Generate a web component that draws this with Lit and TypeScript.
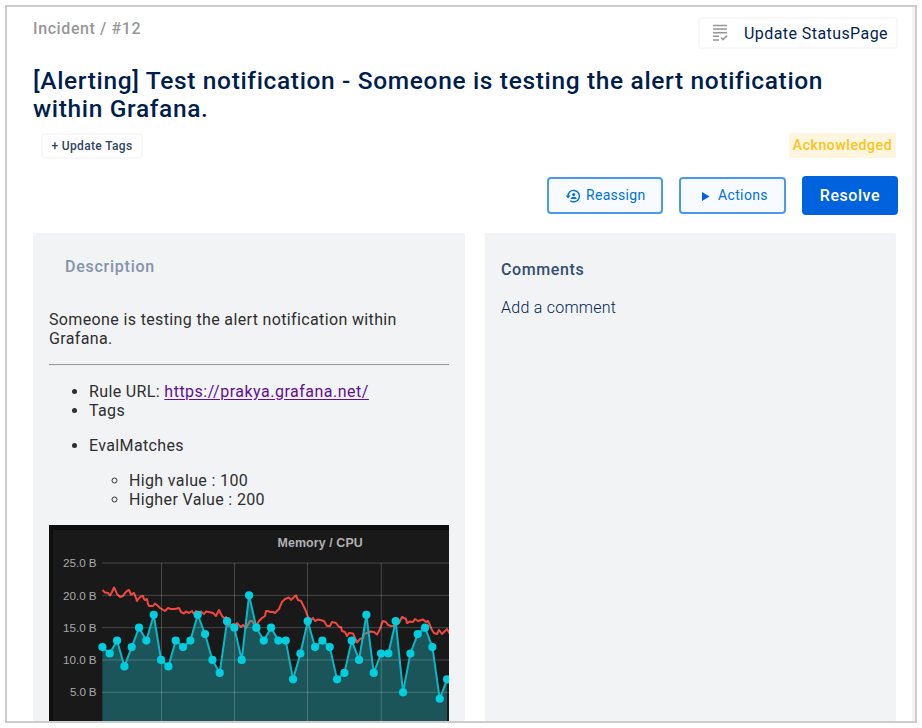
import { LitElement, html, css, svg } from "lit";
import { customElement } from "lit/decorators.js";

const CPU = [12, 11, 13, 9, 12, 15, 13, 17, 10, 9, 13, 12, 13, 17, 14, 10, 8, 16, 15, 10, 20, 15, 13, 15, 13, 13, 7, 11, 16, 12, 13, 12, 7, 8, 13, 10, 17, 8, 11, 11, 16, 5, 11, 14, 15, 12, 4, 7];
const MEMORY = "53.5,65 56,67.5 59,68 61,70.5 63,67 65,62.5 66,64 68,69 71,72 74,71 76,68 78,66 80,65 82,69.5 85,68 87,73 88,76 90,73 92,71.5 94,71 95,74 96,75 98,74 99,79 100,81 104,81 106,78.5 109,81 111,83 116,86 119,83 122,84 126,84 130,83 132,87 135,88.5 137,86.5 140,88 143,86 145,89 147,86 150,91 152,86.5 155,89 157,86.5 160,87 164,88 167,91 170,85 173,91 176,94 177,92 179,101 181,101 184,99 186,101 188,98 192,102 194,100 197,103 201,96 203,96 205,99 208,99.5 210,96 213,93 216,91 217,86 219,86 221,87 224,87 226,88 230,84 233,77 236,74 240,72.5 242,75 244,73 247,70.5 249,75 252,76 254,80 256,84 259,92 262,95 264,93 266,96 269,94.5 275,96 278,101 281,101 283,97 287,98 290,102 292,102 293,106 296,107 298,111 300,108 304,108.5 306,113 308,117.5 311,114 314,113 315,109 318,108 322,106.5 325,107 328,109.5 331,104 333,98 334,96 337,97 339,100 342,101 346,101 350,98 353,92 357,94 358,98 361,96.5 364,97 366,94 369,96 374,94.5 377,97 379,96 383,105 385,108 388,109 390,105 393,109 396,106 398,104 401,109";
const px = (i: number) => 53.4 + i * 7.333;
const py = (v: number) => 199.6 - v * 6.463;

@customElement("metric-chart")
export class MetricChart extends LitElement {
  static styles = css`
    :host { display: block; height: 240px; }
    svg { display: block; }
    .label { font: 11.7px "Liberation Sans", sans-serif; fill: #a8a9aa; text-anchor: end; }
    .title { font: bold 12.4px "Liberation Sans", sans-serif; fill: #b0b2b4; text-anchor: middle; }
    .grid { stroke: #fff; stroke-opacity: 0.2; stroke-width: 1; }
  `;
  render() {
    const line = CPU.map((v, i) => `${px(i)},${py(v)}`).join(" ");
    return html`<svg width="400" height="240" viewBox="0 0 400 240">
      <rect width="400" height="240" fill="#0e0e0e" />
      <rect x="4" y="5" width="396" height="235" fill="#191919" />
      <text class="title" x="271.3" y="22" textLength="85.5">Memory / CPU</text>
      ${[25, 20, 15, 10, 5, 0].map((v) => svg`<text class="label" x="48" y=${py(v) + 4.2} textLength=${v > 5 ? 34 : 27}>${v}.0 B</text>`)}
      <polyline points=${MEMORY} fill="none" stroke="#f0483e" stroke-width="2" stroke-linejoin="round" />
      <polygon points="${px(0)},240 ${line} ${px(47)},240" fill="#20b7c2" fill-opacity="0.38" />
      ${[25, 20, 15, 10, 5].map((v) => svg`<line class="grid" x1="53" x2="400" y1=${py(v)} y2=${py(v)} />`)}
      ${[112.5, 185.5, 258.5, 332.3].map((x) => svg`<line class="grid" y1="38" y2="240" x1=${x} x2=${x} />`)}
      <polyline points=${line} fill="none" stroke="#06b8c8" stroke-width="2" stroke-linejoin="round" />
      ${CPU.map((v, i) => svg`<circle cx=${px(i)} cy=${py(v)} r="4.1" fill="#00cfe0" />`)}
    </svg>`;
  }
}

@customElement("app-root")
export class AppRoot extends LitElement {
  static styles = css`
    * { box-sizing: border-box; }
    :host { display: block; width: 922px; height: 728px; padding: 5px; background: #fff; overflow: hidden; font-family: Roboto, sans-serif; font-size: 16px; color: #2e2e2e; }
    .frame { width: 912px; height: 718px; border: 2px solid #ccc; overflow: hidden; display: flex; }
    .page { width: 905px; height: 714px; padding: 10px 14px 0 26px; display: flex; flex-direction: column; }
    .track { width: 3px; background: #f3f3f3; }
    .top { display: flex; justify-content: space-between; height: 32px; }
    .crumb { font-weight: 500; color: #979797; line-height: 24px; letter-spacing: 0.6px; }
    .status { display: flex; align-items: center; width: 200px; height: 32px; border: 2px solid #f8f8f8; border-radius: 4px; padding-left: 10px; gap: 14px; color: #022451; letter-spacing: 0.43px; white-space: nowrap; }
    h1 { margin: 18px 0 0; font-size: 24.5px; font-weight: 500; line-height: 28px; color: #001e4d; letter-spacing: 0.65px; white-space: nowrap; }
    .tags { display: flex; justify-content: space-between; margin: 10px 2px 0 8px; height: 26px; }
    .update { width: 102px; border: 2px solid #f8f8f8; border-radius: 4px; font-size: 12px; font-weight: 500; line-height: 22px; color: #2f4565; text-align: center; letter-spacing: 0.35px; }
    .ack { width: 107px; height: 25px; background: #fef5df; border-radius: 2px; color: #f8c51c; font-size: 14px; font-weight: 500; line-height: 25px; text-align: center; letter-spacing: 0.58px; }
    .actions { display: flex; justify-content: flex-end; align-items: center; gap: 16px; margin-top: 17px; height: 39px; }
    .btn { display: flex; align-items: center; height: 37px; border: 2px solid #4a9beb; border-radius: 4px; background: #f7fbff; color: #0070db; font-size: 14px; letter-spacing: 0.3px; }
    .btn span { margin-bottom: 2px; }
    .reassign { width: 116px; padding-left: 16px; gap: 5px; }
    .act { width: 107px; padding-left: 16px; gap: 5px; letter-spacing: 0.36px; }
    .resolve { width: 96px; height: 39px; border-radius: 4px; background: #0062dd; color: #fff; font-weight: 500; line-height: 39px; text-align: center; letter-spacing: 0.55px; }
    .panels { display: flex; gap: 20px; margin: 18px 2px 0 0; flex: 1; min-height: 0; }
    .panel { background: #f2f3f5; border-radius: 2px; padding: 0 16px; overflow: hidden; }
    .desc { width: 432px; flex: none; line-height: 19px; letter-spacing: 0.36px; }
    .comments { flex: 1; }
    .desc h2 { margin: 22px 16px 0; font-size: 16px; font-weight: 500; line-height: 24px; color: #8394ab; letter-spacing: 0.75px; }
    .body { margin: 31px 0 16px; }
    hr { margin: 16px 0; height: 2px; border: 0; border-top: 1px solid #9a9a9a; border-bottom: 1px solid #eaebec; }
    ul { margin: 0; padding-left: 40px; }
    .tag { margin-bottom: 16px; }
    .sub { margin: 16px 0; }
    a { color: #5f0f92; text-decoration: underline; text-underline-offset: 2px; letter-spacing: 0.5px; }
    .comments h2 { margin: 27px 0 0; font-size: 16px; font-weight: 500; line-height: 20px; color: #334d6e; letter-spacing: 0.6px; }
    .add { margin-top: 18px; font-weight: 300; line-height: 20px; color: #022451; letter-spacing: 0.25px; }
  `;
  render() {
    return html`<div class="frame">
      <main class="page">
        <header class="top">
          <div class="crumb">Incident / #12</div>
          <div class="status">
            <svg width="20" height="20" viewBox="0 0 20 20" fill="none" stroke="#979797" stroke-width="1.5">
              <path d="M3 2.5h14M3 6.1h14M3 9.7h14M3 13.3h6M3 16.9h6M11 14.6l2 2 4-4" />
            </svg>
            <span>Update StatusPage</span>
          </div>
        </header>
        <h1>[Alerting] Test notification - Someone is testing the alert notification<br />within Grafana.</h1>
        <div class="tags">
          <div class="update">+ Update Tags</div>
          <div class="ack">Acknowledged</div>
        </div>
        <div class="actions">
          <div class="btn reassign">
            <svg width="16" height="16" viewBox="0 0 16 16" fill="none" stroke="#0070db" stroke-width="1.4">
              <path d="M3 8.8A5.7 5.7 0 1 1 5.3 12.7" />
              <path d="M.7 7.6h4.8L3.1 10.4z" fill="#0070db" stroke="none" />
              <circle cx="8.7" cy="6.5" r="1.5" fill="#0070db" stroke="none" />
              <path d="M5.7 11c.3-3 5.7-3 6 0z" fill="#0070db" stroke="none" />
            </svg>
            <span>Reassign</span>
          </div>
          <div class="btn act">
            <svg width="16" height="16" viewBox="0 0 16 16"><path d="M5 4v9l7.5-4.5z" fill="#0062dd" /></svg>
            <span>Actions</span>
          </div>
          <div class="resolve">Resolve</div>
        </div>
        <div class="panels">
          <section class="panel desc">
            <h2>Description</h2>
            <div class="body">Someone is testing the alert notification within<br />Grafana.</div>
            <hr />
            <ul>
              <li>Rule URL: <a>https://prakya.grafana.net/</a></li>
              <li class="tag">Tags</li>
              <li>EvalMatches
                <ul class="sub"><li>High value : 100</li><li>Higher Value : 200</li></ul>
              </li>
            </ul>
            <metric-chart></metric-chart>
          </section>
          <section class="panel comments">
            <h2>Comments</h2>
            <div class="add">Add a comment</div>
          </section>
        </div>
      </main>
      <div class="track"></div>
    </div>`;
  }
}
